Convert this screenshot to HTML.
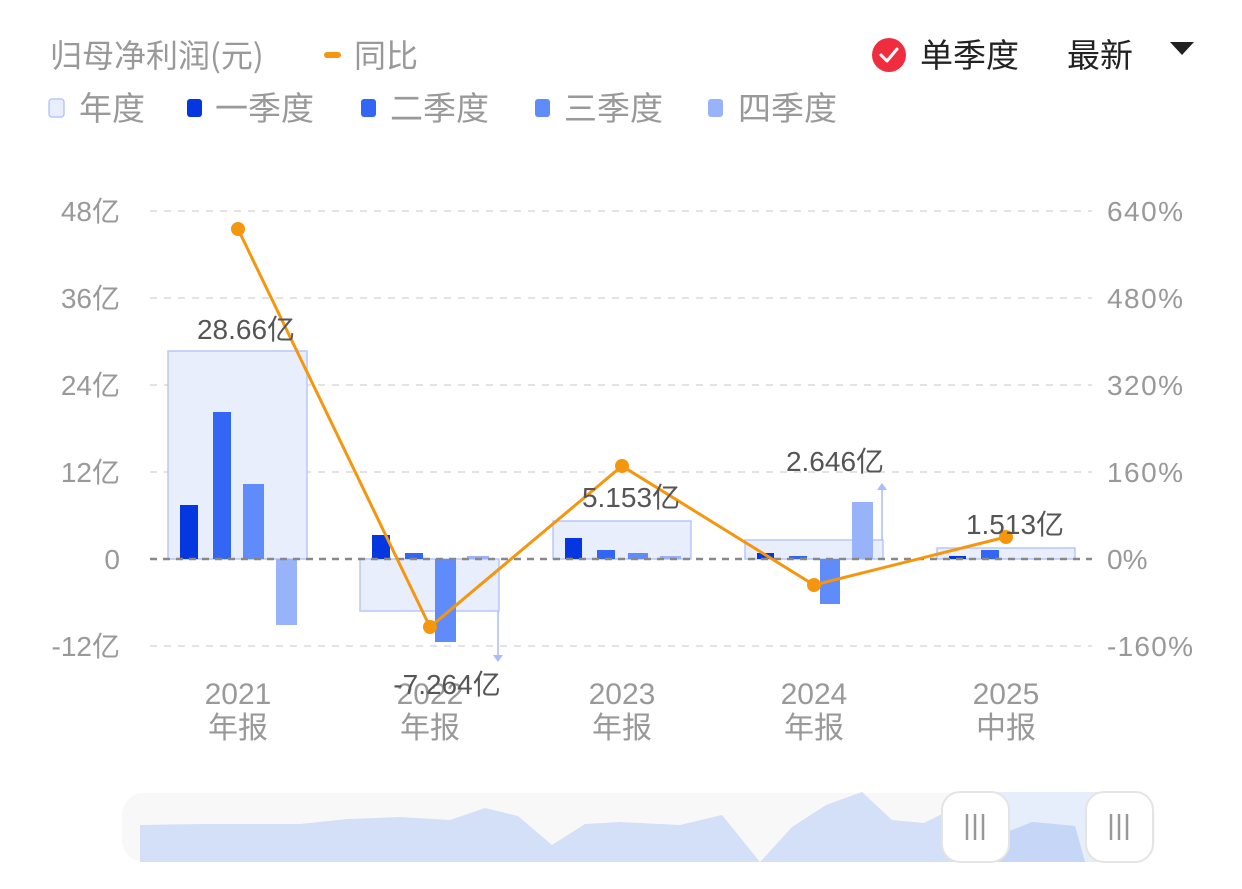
<!DOCTYPE html>
<html><head><meta charset="utf-8"><style>
html,body{margin:0;padding:0;background:#fff;width:1242px;height:889px;overflow:hidden}
svg{display:block;font-family:"Liberation Sans","Noto Sans CJK SC",sans-serif}
</style></head><body>
<svg width="1242" height="889" viewBox="0 0 1242 889">
<!-- legend row 1 -->
<text x="50" y="67" font-size="32" fill="#999" font-family="Noto Sans CJK SC, sans-serif">归母净利润(元)</text>
<rect x="324" y="52" width="17" height="6" rx="3" fill="#f5960f"/>
<text x="354" y="67" font-size="32" fill="#999">同比</text>
<circle cx="889" cy="55" r="17" fill="#f02d3f"/>
<path d="M881 55 L887 61 L897 49" stroke="#fff" stroke-width="3" fill="none" stroke-linecap="round" stroke-linejoin="round"/>
<text x="920" y="67" font-size="33" fill="#222">单季度</text>
<text x="1067" y="67" font-size="33" fill="#222">最新</text>
<path d="M1170 42 L1194 42 L1182 55 Z" fill="#222"/>
<!-- legend row 2 -->
<rect x="49" y="99" width="15" height="18" rx="3" fill="#e8eefc" stroke="#b7c8f8" stroke-width="1.5"/>
<text x="79" y="120" font-size="33" fill="#999">年度</text>
<rect x="187" y="99" width="15" height="18" rx="3" fill="#0437e0"/>
<text x="215" y="120" font-size="33" fill="#999">一季度</text>
<rect x="361" y="99" width="15" height="18" rx="3" fill="#3366f5"/>
<text x="390" y="120" font-size="33" fill="#999">二季度</text>
<rect x="535" y="99" width="15" height="18" rx="3" fill="#5f8bfb"/>
<text x="564" y="120" font-size="33" fill="#999">三季度</text>
<rect x="708" y="99" width="15" height="18" rx="3" fill="#99b3fb"/>
<text x="738" y="120" font-size="33" fill="#999">四季度</text>
<!-- grid -->
<g stroke="#e3e3e3" stroke-width="2" stroke-dasharray="7 7">
<line x1="150" y1="211" x2="1092" y2="211"/>
<line x1="150" y1="298" x2="1092" y2="298"/>
<line x1="150" y1="385" x2="1092" y2="385"/>
<line x1="150" y1="472" x2="1092" y2="472"/>
<line x1="150" y1="646" x2="1092" y2="646"/>
</g>
<g font-size="28" fill="#999" text-anchor="end">
<text x="120" y="221">48亿</text><text x="120" y="308">36亿</text><text x="120" y="395">24亿</text>
<text x="120" y="482">12亿</text><text x="120" y="569">0</text><text x="120" y="656">-12亿</text>
</g>
<g font-size="28" fill="#999" textLength="76">
<text x="1107" y="221" textLength="76">640%</text><text x="1107" y="308" textLength="76">480%</text><text x="1107" y="395" textLength="76">320%</text>
<text x="1107" y="482" textLength="76">160%</text><text x="1107" y="569">0%</text><text x="1107" y="656" textLength="86">-160%</text>
</g>
<!-- boxes -->
<g fill="#e8eefc" stroke="#b7c8f8" stroke-width="1.5">
<rect x="168" y="351" width="139" height="208"/>
<rect x="360" y="559" width="139" height="52"/>
<rect x="553" y="521" width="138" height="38"/>
<rect x="745" y="540" width="138" height="19"/>
<rect x="937" y="548" width="138" height="11"/>
</g>
<!-- bars -->
<g>
<rect x="180" y="505" width="18" height="54" fill="#0437e0"/>
<rect x="213" y="412" width="18" height="147" fill="#3366f5"/>
<rect x="243" y="484" width="21" height="75" fill="#5f8bfb"/>
<rect x="276" y="559" width="21" height="66" fill="#99b3fb"/>
<rect x="372" y="535" width="18" height="24" fill="#0437e0"/>
<rect x="405" y="553" width="18" height="6" fill="#3366f5"/>
<rect x="435" y="559" width="21" height="83" fill="#5f8bfb"/>
<rect x="467" y="556" width="22" height="3" fill="#99b3fb"/>
<rect x="565" y="538" width="17" height="21" fill="#0437e0"/>
<rect x="597" y="550" width="18" height="9" fill="#3366f5"/>
<rect x="628" y="553" width="20" height="6" fill="#5f8bfb"/>
<rect x="660" y="556" width="21" height="3" fill="#99b3fb"/>
<rect x="757" y="553" width="17" height="6" fill="#0437e0"/>
<rect x="789" y="556" width="18" height="3" fill="#3366f5"/>
<rect x="820" y="559" width="20" height="45" fill="#5f8bfb"/>
<rect x="852" y="502" width="21" height="57" fill="#99b3fb"/>
<rect x="949" y="556" width="17" height="3" fill="#0437e0"/>
<rect x="981" y="550" width="18" height="9" fill="#3366f5"/>
</g>
<line x1="150" y1="559" x2="1092" y2="559" stroke="#888" stroke-width="2.5" stroke-dasharray="7 6"/>
<!-- arrows -->
<line x1="498" y1="611" x2="498" y2="656" stroke="#a9bdf8" stroke-width="1.5"/>
<path d="M493 655 L503 655 L498 662 Z" fill="#a9bdf8"/>
<line x1="882" y1="540" x2="882" y2="488" stroke="#a9bdf8" stroke-width="1.5"/>
<path d="M877 490 L887 490 L882 483 Z" fill="#a9bdf8"/>
<!-- line -->
<polyline points="238,229 430,627 622,466 814,585 1006,537" fill="none" stroke="#f5960f" stroke-width="3"/>
<g fill="#f5960f">
<circle cx="238" cy="229" r="7"/><circle cx="430" cy="627" r="7"/><circle cx="622" cy="466" r="7"/><circle cx="814" cy="585" r="7"/><circle cx="1006" cy="537" r="7"/>
</g>
<!-- x labels -->
<g font-size="30" fill="#999" text-anchor="middle">
<text x="238" y="704">2021</text><text x="238" y="738">年报</text>
<text x="430" y="704">2022</text><text x="430" y="738">年报</text>
<text x="622" y="704">2023</text><text x="622" y="738">年报</text>
<text x="814" y="704">2024</text><text x="814" y="738">年报</text>
<text x="1006" y="704">2025</text><text x="1006" y="738">中报</text>
</g>
<!-- value labels -->
<g font-size="28" fill="#555" text-anchor="middle">
<text x="246" y="339">28.66亿</text>
<text x="447" y="694">-7.264亿</text>
<text x="631" y="507">5.153亿</text>
<text x="835" y="471">2.646亿</text>
<text x="1015" y="534">1.513亿</text>
</g>
<!-- slider -->
<rect x="122" y="793" width="1033" height="69" rx="22" fill="#f8f8f8"/>
<rect x="975" y="792" width="144" height="70" fill="#e6edfb"/>
<path d="M140 825 L200 824 L300 824 L348 819 L400 817 L450 820 L485 808 L518 816 L552 845 L585 824 L620 822 L680 825 L722 815 L760 862 L792 827 L826 805 L862 792 L892 820 L924 823 L960 805 L1000 835 L1032 822 L1075 826 L1085 862 L140 862 Z" fill="#d4e0f8"/>
<path d="M975 862 L975 845 L1032 822 L1075 826 L1085 862 Z" fill="#c5d6f6"/>
<g fill="#fff" stroke="#e4e4e4" stroke-width="2">
<rect x="942" y="792" width="67" height="70" rx="18"/>
<rect x="1086" y="792" width="67" height="70" rx="18"/>
</g>
<g stroke="#999" stroke-width="2.5">
<line x1="967" y1="814" x2="967" y2="840"/><line x1="975" y1="814" x2="975" y2="840"/><line x1="983" y1="814" x2="983" y2="840"/>
<line x1="1111" y1="814" x2="1111" y2="840"/><line x1="1119" y1="814" x2="1119" y2="840"/><line x1="1127" y1="814" x2="1127" y2="840"/>
</g>
</svg>
</body></html>
